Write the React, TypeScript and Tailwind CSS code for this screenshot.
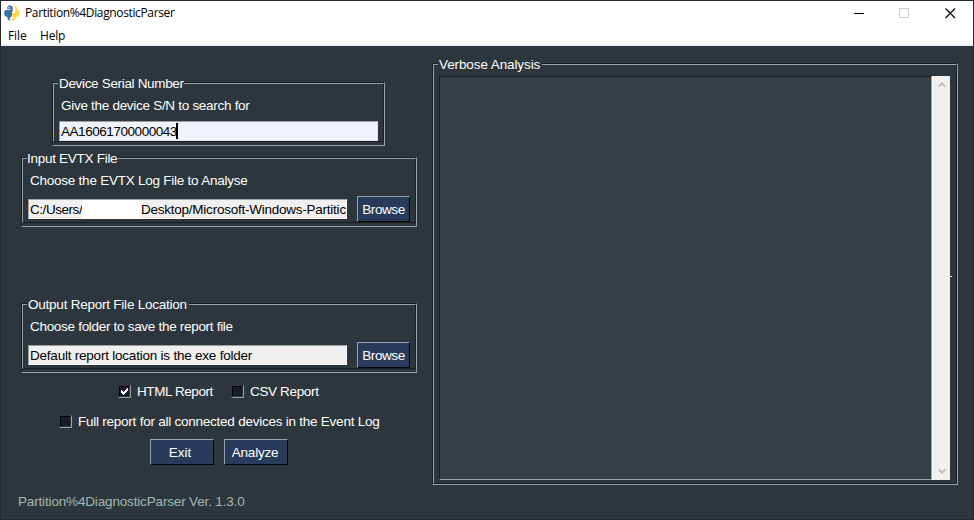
import type { ReactNode } from "react";

function Frame({ title, className, titleClass, children }: { title: string; className: string; titleClass: string; children: ReactNode }) {
  return (
    <fieldset className={`relative shrink-0 border border-t-[#192024] border-l-[#192024] border-r-[#9ba0a3] border-b-[#9ba0a3] ${className}`}>
      <div className="h-full border border-t-[#9ba0a3] border-l-[#9ba0a3] border-r-[#192024] border-b-[#192024]">{children}</div>
      <span className={`absolute left-[5px] -top-[7px] h-4 bg-[#2c363c] leading-4 whitespace-nowrap ${titleClass}`}>{title}</span>
    </fieldset>
  );
}

function Button({ label, className }: { label: string; className: string }) {
  return (
    <button className={`h-[26px] shrink-0 border border-t-[#94a0b0] border-l-[#94a0b0] border-r-black border-b-black bg-[#283b5b] text-center leading-[25px] whitespace-nowrap ${className}`}>
      {label}
    </button>
  );
}

function Check({ label, checked, className, labelClass }: { label: string; checked?: boolean; className?: string; labelClass: string }) {
  return (
    <label className={`flex h-4 items-center ${className ?? ""}`}>
      <span className="-mt-px h-[13px] w-[13px] shrink-0 border border-t-[#2c363c] border-l-[#2c363c] border-r-[#9ba0a3] border-b-[#9ba0a3]">
        <span className="block h-[11px] w-[11px] border border-t-black border-l-black border-r-[#2c363c] border-b-[#2c363c] bg-[#191c28]">
          {checked && (
            <svg width="9" height="9" viewBox="0 0 9 9" shapeRendering="crispEdges">
              <path d="M1 3h1v1h1v1h1v-1h1v-1h1v-1h1v-1h1v3h-1v1h-1v1h-1v1h-1v1h-1v-1h-1v-1h-1z" fill="#fff" />
            </svg>
          )}
        </span>
      </span>
      <span className={`ml-1.5 leading-4 whitespace-nowrap ${labelClass}`}>{label}</span>
    </label>
  );
}

export default function App() {
  return (
    <div className="flex h-[520px] w-[974px] flex-col overflow-hidden border border-[#202b2e] bg-[#2c363c] font-['Liberation_Sans',Arial,sans-serif] text-[13.5px] text-white">
      <header className="h-[45px] shrink-0 border-b-2 border-[#f0f0f0] bg-white font-['Open_Sans',sans-serif] text-[12px] text-black">
        <div className="flex h-6 items-center">
          <svg className="ml-[3px] shrink-0" width="16" height="16" viewBox="0 0 16 16">
            <path d="M8.2 1.2C6.3.1 3.3.6 3.3 2.5v1.8h3.5v.8H2C.5 5.1.1 7 .2 8.5c.1 1.7.9 3.3 2.3 3.3h.9v1.4c0 1.6 1.6 2.4 3.2 2.2-.9-.7-1.2-1.7-.5-2.7.6-.8 1.9-1.1 1.9-2.8V7.5c0-1.1.7-1.6 1-2.1z" fill="#3973a5" />
            <path d="M8.8 1.3c1.5-1.1 4.1-.6 4.1 1.4v1.7c1.9 0 2.8 1.2 2.8 3.7 0 2.3-.8 3.6-2.5 3.6h-1v1.5c0 1.5-1.6 2.4-3.4 2.2-1.3-.2-2.1-1-1.7-2.2h2.3v-.8H8.1V9.2c0-1.1.7-1.7 1.7-1.7.9 0 1.6-.6 1.6-1.7V3.3c0-1-.8-1.9-2.6-2z" fill="#ffd94d" />
            <circle cx="5.1" cy="2.8" r=".8" fill="#fff" />
            <circle cx="10.7" cy="13.5" r=".7" fill="#fff" />
          </svg>
          <span className="ml-[5px] tracking-[-0.36px] leading-4 whitespace-nowrap">Partition%4DiagnosticParser</span>
          <div className="ml-auto flex h-full items-center pr-4">
            <svg width="104" height="11" viewBox="0 0 104 11" fill="none" shapeRendering="crispEdges">
              <path d="M1 5.5h10" stroke="#000" />
              <path d="M46.5.5h9v9h-9z" stroke="#ccc" />
              <path d="m92.5.5 9.5 9.5M102 .5l-9.5 9.5" stroke="#000" strokeWidth="1.2" shapeRendering="auto" />
            </svg>
          </div>
        </div>
        <nav className="flex h-[19px] items-center pt-0.5 pl-[7px]">
          <span className="w-8 tracking-[-0.1px] leading-4">File</span>
          <span className="tracking-[-0.2px] leading-4">Help</span>
        </nav>
      </header>

      <main className="flex min-h-0 flex-1 pl-5">
        <section className="flex w-[411px] shrink-0 flex-col">
          <Frame title="Device Serial Number" className="mt-9 ml-[31px] h-16 w-[333px]" titleClass="w-[126px] pl-px tracking-[-0.33px]">
            <div className="px-[5px] pt-3.5">
              <p className="h-4 pl-0.5 tracking-[-0.29px] leading-4 whitespace-nowrap">Give the device S/N to search for</p>
              <div className="mt-[7px] flex h-5 items-center border border-t-[#9ba0a3] border-l-[#9ba0a3] border-r-[#e3e3e3] border-b-[#e3e3e3] bg-[#f0f3f9] pl-px text-black">
                <span className="w-[115px] pt-px tracking-[-0.45px] leading-4 whitespace-nowrap">AA16061700000043</span>
                <span className="h-4 w-0.5 bg-black" />
              </div>
            </div>
          </Frame>

          <Frame title="Input EVTX File" className="mt-[11px] h-[70px] w-[396px]" titleClass="w-[91px] tracking-[-0.28px]">
            <div className="pt-3.5 pl-[5px]">
              <p className="h-4 pl-0.5 tracking-[-0.24px] leading-4 whitespace-nowrap">Choose the EVTX Log File to Analyse</p>
              <div className="mt-[7px] flex h-[26px] items-center">
                <div className="flex h-5 w-[319px] shrink-0 items-center overflow-hidden border border-t-[#9ba0a3] border-l-[#9ba0a3] border-r-white border-b-white bg-[#f0f0f0] pl-px pt-px leading-4 whitespace-nowrap text-black">
                  <span className="w-[52px] shrink-0 tracking-[-0.45px]">C:/Users/</span>
                  <span className="relative -mt-px h-[21px] w-[59px] shrink-0 bg-white" />
                  <span className="tracking-[-0.24px]">Desktop/Microsoft-Windows-Partitic</span>
                </div>
                <Button label="Browse" className="ml-2.5 w-[53px] tracking-[-0.4px]" />
              </div>
            </div>
          </Frame>

          <Frame title="Output Report File Location" className="mt-[76px] h-[70px] w-[396px]" titleClass="w-[162px] pl-px tracking-[-0.23px]">
            <div className="pt-3.5 pl-[5px]">
              <p className="h-4 pl-0.5 tracking-[-0.3px] leading-4 whitespace-nowrap">Choose folder to save the report file</p>
              <div className="mt-[7px] flex h-[26px] items-center">
                <div className="flex h-5 w-[319px] shrink-0 items-center border border-t-[#9ba0a3] border-l-[#9ba0a3] border-r-white border-b-white bg-[#f0f0f0] pl-px pt-px tracking-[-0.22px] leading-4 whitespace-nowrap text-black">Default report location is the exe folder</div>
                <Button label="Browse" className="ml-2.5 w-[53px] tracking-[-0.4px]" />
              </div>
            </div>
          </Frame>

          <div className="mt-[11px] ml-[97px] flex">
            <Check label="HTML Report" checked className="w-[113px]" labelClass="tracking-[-0.42px]" />
            <Check label="CSV Report" labelClass="tracking-[-0.35px]" />
          </div>
          <Check label="Full report for all connected devices in the Event Log" className="mt-3.5 ml-[38px]" labelClass="tracking-[-0.24px]" />
          <div className="mt-[9px] ml-[129px] flex gap-2.5">
            <Button label="Exit" className="w-16 pr-1" />
            <Button label="Analyze" className="w-16 pr-0.5 tracking-[-0.25px]" />
          </div>
          <footer className="mt-[29px] -ml-[3px] tracking-[-0.16px] leading-4 whitespace-nowrap text-[#a2b9b1]">Partition%4DiagnosticParser Ver. 1.3.0</footer>
        </section>

        <Frame title="Verbose Analysis" className="mt-[17px] h-[422px] w-[526px]" titleClass="w-[104px] pl-px tracking-[-0.1px]">
          <div className="flex h-full pt-[11px] pb-[3px] pl-[5px]">
            <div className="h-[404px] w-[493px] border border-t-[#192024] border-l-[#192024] border-r-[#9ba0a3] border-b-[#9ba0a3] bg-[#344046]" />
            <div className="relative flex h-[404px] w-[18px] flex-col items-center justify-between border-l border-white bg-[#f0f0f0] py-[5px]">
              <svg width="8" height="7" viewBox="0 0 8 7"><path d="m.8 5.5 3.2-3.2 3.2 3.2" fill="none" stroke="#bfbfbf" strokeWidth="2" /></svg>
              <svg width="8" height="7" viewBox="0 0 8 7"><path d="m.8 1.5 3.2 3.2 3.2-3.2" fill="none" stroke="#bfbfbf" strokeWidth="2" /></svg>
              <span className="absolute top-[200px] left-[17px] h-px w-0.5 bg-white" />
            </div>
          </div>
        </Frame>
      </main>
    </div>
  );
}
